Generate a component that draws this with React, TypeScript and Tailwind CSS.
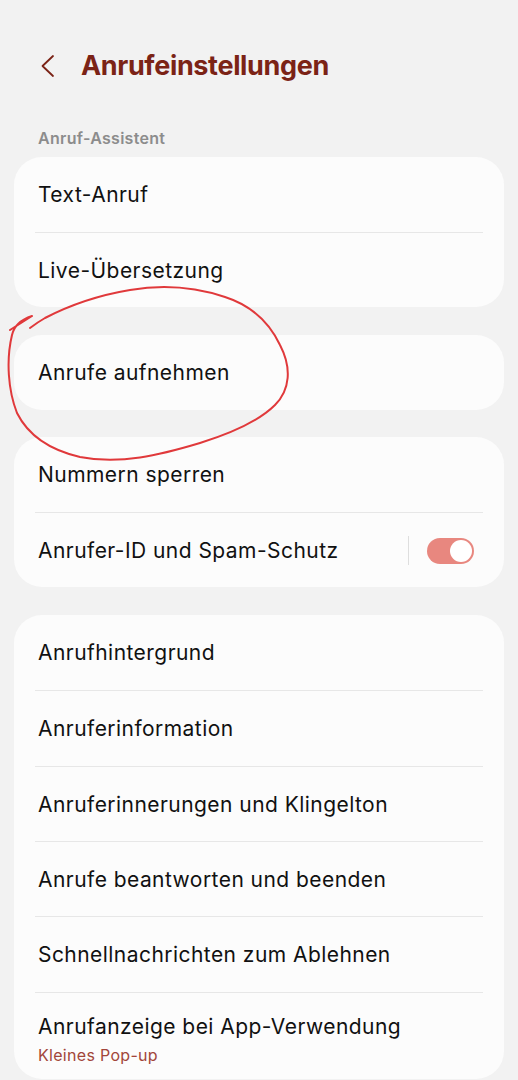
import React from "react";

const font = { fontFamily: "Inter, 'Noto Sans', sans-serif" };

function Row({ label, sub, right, h = "h-[75px]" }: { label: string; sub?: string; right?: React.ReactNode; h?: string }) {
  return (
    <div className={`${h} flex items-center pl-[24px] pr-[30px] ${sub ? "pt-[6px]" : "pt-px"}`}>
      <div className="flex-1 flex flex-col">
        <span className="text-[21px] leading-[26px] text-[#111111] tracking-[0.45px]">{label}</span>
        {sub && <span className="text-[16px] leading-[20px] mt-[5px] text-[#a2463a] tracking-[0.3px]">{sub}</span>}
      </div>
      {right}
    </div>
  );
}

function Sep() {
  return <div className="h-px bg-[#e7e7e7] mx-[21px]" />;
}

function Toggle() {
  return (
    <div className="flex items-center">
      <div className="w-px h-[29px] bg-[#dedede] mr-[18px]" />
      <div className="w-[47px] h-[26px] rounded-full bg-[#e8877f] flex items-center justify-end pr-[2px]">
        <div className="w-[22px] h-[22px] rounded-full bg-white" />
      </div>
    </div>
  );
}

export default function App() {
  return (
    <div className="relative w-[518px] min-h-[1080px] bg-[#f2f2f2] overflow-hidden" style={font}>
      <div className="px-[14px]">
        <div className="mt-[34px] h-[64px] flex items-center pl-[25px]">
          <svg width="17" height="24" viewBox="0 0 17 24" className="mr-[25px]">
            <path d="M14 2 L3.5 12 L14 22" fill="none" stroke="#7b2316" strokeWidth="1.8" strokeLinecap="round" strokeLinejoin="round" />
          </svg>
          <span className="text-[27px] font-bold text-[#7b2316] tracking-[-0.35px]">Anrufeinstellungen</span>
        </div>
        <div className="mt-[30px] h-[20px] leading-[20px] pl-[24px] text-[16px] font-semibold text-[#8c8c8c] tracking-[0.3px]">Anruf-Assistent</div>

        <div className="mt-[9px] bg-[#fcfcfc] rounded-[28px]">
          <Row label="Text-Anruf" />
          <Sep />
          <Row label="Live-Übersetzung" h="h-[74px]" />
        </div>

        <div className="mt-[28px] bg-[#fcfcfc] rounded-[28px]">
          <Row label="Anrufe aufnehmen" />
        </div>

        <div className="mt-[27px] bg-[#fcfcfc] rounded-[28px]">
          <Row label="Nummern sperren" />
          <Sep />
          <Row label="Anrufer-ID und Spam-Schutz" h="h-[74px]" right={<Toggle />} />
        </div>

        <div className="mt-[28px] bg-[#fcfcfc] rounded-[28px]">
          <Row label="Anrufhintergrund" />
          <Sep />
          <Row label="Anruferinformation" />
          <Sep />
          <Row label="Anruferinnerungen und Klingelton" h="h-[74px]" />
          <Sep />
          <Row label="Anrufe beantworten und beenden" h="h-[74px]" />
          <Sep />
          <Row label="Schnellnachrichten zum Ablehnen" />
          <Sep />
          <Row label="Anrufanzeige bei App-Verwendung" sub="Kleines Pop-up" h="h-[86px]" />
        </div>
      </div>

      <svg className="absolute top-0 left-0 pointer-events-none" width="518" height="500" viewBox="0 0 518 500">
        <path
          d="M10 330 L32 316 M32 316 C20 320 14 326 12 335 C6 360 8 390 17 413 C28 435 50 450 80 457 C120 465 160 455 200 443 C235 432 262 418 275 405 C290 390 292 368 280 345 C268 320 250 305 225 297 C195 287 165 284 130 290 C100 295 70 305 45 318 C38 322 34 325 30 328"
          fill="none"
          stroke="#e0393b"
          strokeWidth="2"
          strokeLinecap="round"
          strokeLinejoin="round"
        />
      </svg>
    </div>
  );
}
